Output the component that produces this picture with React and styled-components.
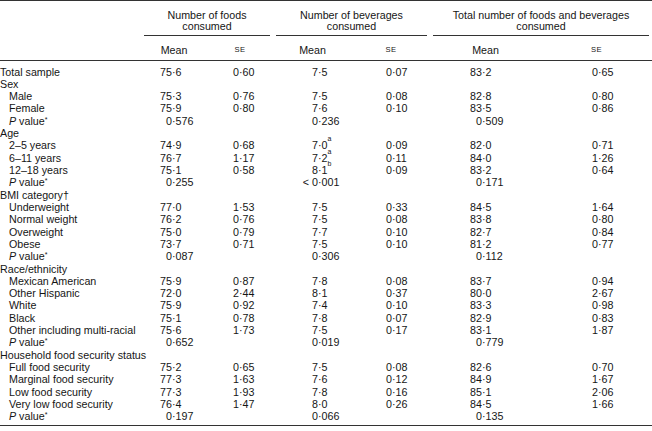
import React from 'react';
import styled, { createGlobalStyle } from 'styled-components';

const Global = createGlobalStyle`
  html, body { margin: 0; padding: 0; background: #fff; }
  body { font-family: "Liberation Sans", Arial, Helvetica, sans-serif; color: #151515; }
`;

const COLS = '141px 66px 66px 79px 78px 111px 111px';
const DEC = [31, 32, 45, 40, 52, 57];

const Table = styled.div`
  width: 652px;
  font-size: 10.7px;
  border-top: 1px solid #333;
`;

const HeaderRow = styled.div`
  display: grid;
  grid-template-columns: ${COLS};
`;

const SubHeaderRow = styled(HeaderRow)`
  border-bottom: 1px solid #333;
`;

const GroupTitle = styled.div`
  grid-column: span 2;
  margin: 0 3px;
  padding: 8.5px 0 2.5px;
  border-bottom: 1px solid #333;
  text-align: center;
  line-height: 11.5px;
`;

const SubHead = styled.div`
  padding: 8px 0 4px;
  line-height: 12px;
  text-align: center;
  font-size: ${(p) => (p.$small ? '7.6px' : 'inherit')};
  letter-spacing: ${(p) => (p.$small ? '0.4px' : '0')};
`;

const Body = styled.div`
  padding: 4.5px 0 2px;
  border-bottom: 1px solid #333;
`;

const Row = styled.div`
  display: grid;
  grid-template-columns: ${COLS};
  height: 12.32px;
  line-height: 12.32px;
  white-space: nowrap;
`;

const Label = styled.div`
  padding-left: ${(p) => (p.$indent ? '9px' : '0')};
`;

const Italic = styled.i`
  font-style: italic;
`;

const Num = styled.div`
  display: flex;
`;

const Int = styled.span`
  display: inline-block;
  text-align: right;
  flex: none;
`;

const Sup = styled.sup`
  font-size: 7px;
  line-height: 0;
  vertical-align: 3.5px;
`;

function NumCell({ value, col }) {
  if (!value) return <div />;
  const [val, sup] = value.split('^');
  const i = val.indexOf('·');
  const intPart = val.slice(0, i);
  const rest = val.slice(i);
  return (
    <Num>
      <Int style={{ width: DEC[col] }}>{intPart}</Int>
      <span>{rest}</span>
      {sup && <Sup>{sup}</Sup>}
    </Num>
  );
}

const data = [
  { t: 'd', l: 'Total sample', v: ['75·6', '0·60', '7·5', '0·07', '83·2', '0·65'] },
  { t: 'h', l: 'Sex' },
  { t: 'd', i: 1, l: 'Male', v: ['75·3', '0·76', '7·5', '0·08', '82·8', '0·80'] },
  { t: 'd', i: 1, l: 'Female', v: ['75·9', '0·80', '7·6', '0·10', '83·5', '0·86'] },
  { t: 'p', v: ['0·576', '0·236', '0·509'] },
  { t: 'h', l: 'Age' },
  { t: 'd', i: 1, l: '2–5 years', v: ['74·9', '0·68', '7·0^a', '0·09', '82·0', '0·71'] },
  { t: 'd', i: 1, l: '6–11 years', v: ['76·7', '1·17', '7·2^a', '0·11', '84·0', '1·26'] },
  { t: 'd', i: 1, l: '12–18 years', v: ['75·1', '0·58', '8·1^b', '0·09', '83·2', '0·64'] },
  { t: 'p', v: ['0·255', '< 0·001', '0·171'] },
  { t: 'h', l: 'BMI category†' },
  { t: 'd', i: 1, l: 'Underweight', v: ['77·0', '1·53', '7·5', '0·33', '84·5', '1·64'] },
  { t: 'd', i: 1, l: 'Normal weight', v: ['76·2', '0·76', '7·5', '0·08', '83·8', '0·80'] },
  { t: 'd', i: 1, l: 'Overweight', v: ['75·0', '0·79', '7·7', '0·10', '82·7', '0·84'] },
  { t: 'd', i: 1, l: 'Obese', v: ['73·7', '0·71', '7·5', '0·10', '81·2', '0·77'] },
  { t: 'p', v: ['0·087', '0·306', '0·112'] },
  { t: 'h', l: 'Race/ethnicity' },
  { t: 'd', i: 1, l: 'Mexican American', v: ['75·9', '0·87', '7·8', '0·08', '83·7', '0·94'] },
  { t: 'd', i: 1, l: 'Other Hispanic', v: ['72·0', '2·44', '8·1', '0·37', '80·0', '2·67'] },
  { t: 'd', i: 1, l: 'White', v: ['75·9', '0·92', '7·4', '0·10', '83·3', '0·98'] },
  { t: 'd', i: 1, l: 'Black', v: ['75·1', '0·78', '7·8', '0·07', '82·9', '0·83'] },
  { t: 'd', i: 1, l: 'Other including multi-racial', v: ['75·6', '1·73', '7·5', '0·17', '83·1', '1·87'] },
  { t: 'p', v: ['0·652', '0·019', '0·779'] },
  { t: 'h', l: 'Household food security status' },
  { t: 'd', i: 1, l: 'Full food security', v: ['75·2', '0·65', '7·5', '0·08', '82·6', '0·70'] },
  { t: 'd', i: 1, l: 'Marginal food security', v: ['77·3', '1·63', '7·6', '0·12', '84·9', '1·67'] },
  { t: 'd', i: 1, l: 'Low food security', v: ['77·3', '1·93', '7·8', '0·16', '85·1', '2·06'] },
  { t: 'd', i: 1, l: 'Very low food security', v: ['76·4', '1·47', '8·0', '0·26', '84·5', '1·66'] },
  { t: 'p', v: ['0·197', '0·066', '0·135'] },
];

function BodyRow({ r }) {
  if (r.t === 'h') {
    return (
      <Row>
        <Label>{r.l}</Label>
      </Row>
    );
  }
  if (r.t === 'p') {
    return (
      <Row>
        <Label $indent>
          <Italic>P</Italic> value<Sup>*</Sup>
        </Label>
        <NumCell value={r.v[0]} col={0} />
        <div />
        <NumCell value={r.v[1]} col={2} />
        <div />
        <NumCell value={r.v[2]} col={4} />
        <div />
      </Row>
    );
  }
  return (
    <Row>
      <Label $indent={!!r.i}>{r.l}</Label>
      {r.v.map((v, k) => (
        <NumCell key={k} value={v} col={k} />
      ))}
    </Row>
  );
}

export default function App() {
  return (
    <>
      <Global />
      <Table>
        <HeaderRow>
          <div />
          <GroupTitle>Number of foods<br />consumed</GroupTitle>
          <GroupTitle>Number of beverages<br />consumed</GroupTitle>
          <GroupTitle>Total number of foods and beverages<br />consumed</GroupTitle>
        </HeaderRow>
        <SubHeaderRow>
          <div />
          <SubHead>Mean</SubHead>
          <SubHead $small>SE</SubHead>
          <SubHead>Mean</SubHead>
          <SubHead $small>SE</SubHead>
          <SubHead>Mean</SubHead>
          <SubHead $small>SE</SubHead>
        </SubHeaderRow>
        <Body>
          {data.map((r, k) => (
            <BodyRow key={k} r={r} />
          ))}
        </Body>
      </Table>
    </>
  );
}
